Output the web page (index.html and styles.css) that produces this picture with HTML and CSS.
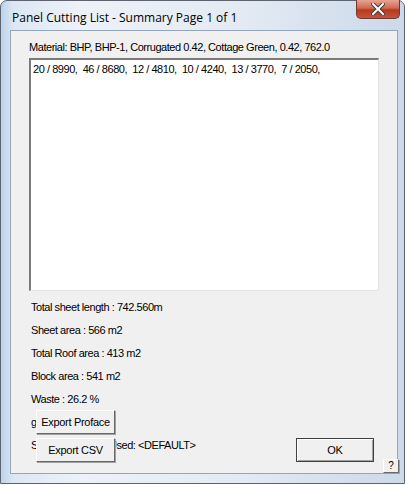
FILE: index.html
```html
<!DOCTYPE html>
<html lang="en">
  <head>
    <meta charset="UTF-8" />
    <title>Panel Cutting List</title>
    <link rel="stylesheet" href="styles.css">
  </head>
  <body>
    <div class="window">
      <!-- Title bar -->
      <div class="titlebar">
        <span class="title">Panel Cutting List - Summary Page 1 of 1</span>
        <button class="close-btn">
          <svg width="14" height="12" viewBox="0 0 14 12">
            <path d="M2 1 L12 11 M12 1 L2 11" stroke="#3b3b3b" stroke-width="4" stroke-linecap="square" />
            <path d="M2 1 L12 11 M12 1 L2 11" stroke="#ffffff" stroke-width="2" stroke-linecap="square" />
          </svg>
        </button>
      </div>

      <!-- Client area -->
      <div class="client">
        <p class="material">Material: BHP, BHP-1, Corrugated 0.42, Cottage Green, 0.42, 762.0</p>
        <div class="listbox">20 / 8990,&nbsp; 46 / 8680,&nbsp; 12 / 4810,&nbsp; 10 / 4240,&nbsp; 13 / 3770,&nbsp; 7 / 2050,</div>

        <div class="stats">
          <div class="stat">Total sheet length : 742.560m</div>
          <div class="stat">Sheet area : 566 m2</div>
          <div class="stat">Total Roof area : 413 m2</div>
          <div class="stat">Block area : 541 m2</div>
          <div class="stat">Waste : 26.2 %</div>
          <div class="stat">gutters</div>
          <div class="stat">Setting Filename Used: &lt;DEFAULT&gt;</div>
        </div>

        <button class="btn btn-proface">Export Proface</button>
        <button class="btn btn-csv">Export CSV</button>
        <button class="btn btn-ok">OK</button>
        <button class="btn btn-help">?</button>
      </div>
    </div>
  </body>
</html>
```

FILE: styles.css
```css
* {
  box-sizing: border-box;
}
html,
body {
  margin: 0;
  height: 100%;
}
body {
  background: #ffffff;
  font-family: "Liberation Sans", Arial, sans-serif;
}
.window {
  width: 405px;
  height: 484px;
  display: flex;
  flex-direction: column;
  padding: 0 6px 9px 9px;
  border: 1px solid #5b6470;
  border-radius: 7px 7px 0 0;
  background: linear-gradient(to right, #bcd2ea 0, #dce7f3 3%, #edf2f8 20%, #e3eaf3 60%, #cbd9ea 100%);
}
.titlebar {
  height: 29px;
  display: flex;
  align-items: flex-start;
  justify-content: space-between;
}
.title {
  font-family: "Open Sans", sans-serif;
  font-size: 12px;
  color: #000;
  margin: 8px 0 0 2px;
}
.close-btn {
  width: 44px;
  height: 19px;
  margin-top: -1px;
  margin-right: -2px;
  border: 1px solid #6f3a32;
  border-top: none;
  border-radius: 0 0 5px 5px;
  background: linear-gradient(to bottom, #e8a493 0, #d1694f 45%, #b43a1f 55%, #c8523a 100%);
  display: flex;
  align-items: center;
  justify-content: center;
  padding: 0;
}
.client {
  flex: 1;
  position: relative;
  background: #f0f0f0;
  border: 1px solid #94a6bc;
  padding: 9px 18px 0 18px;
  font-size: 11px;
  letter-spacing: -0.45px;
  color: #000;
}
.material {
  margin: 0;
  height: 18px;
  line-height: 14px;
}
.listbox {
  height: 233px;
  background: #ffffff;
  border-top: 2px solid #7a7a7a;
  border-left: 2px solid #7a7a7a;
  border-right: 1px solid #e3e3e3;
  border-bottom: 1px solid #e3e3e3;
  padding: 2px 2px;
  line-height: 14px;
  white-space: nowrap;
}
.stats {
  margin-top: 5px;
  display: flex;
  flex-direction: column;
}
.stat {
  height: 23px;
  line-height: 23px;
  padding-left: 2px;
}
.btn {
  position: absolute;
  font-family: "Liberation Sans", Arial, sans-serif;
  font-size: 11px;
  letter-spacing: -0.3px;
  color: #000;
  background: #f0f0f0;
  border: 1px solid;
  border-color: #ffffff #696969 #696969 #ffffff;
  box-shadow: 1px 1px 0 #a0a0a0;
  padding: 0;
}
.btn-proface {
  left: 25px;
  top: 379px;
  width: 79px;
  height: 24px;
}
.btn-csv {
  left: 25px;
  top: 407px;
  width: 79px;
  height: 24px;
}
.btn-ok {
  left: 285px;
  top: 407px;
  width: 78px;
  height: 24px;
  border: 1px solid #404040;
  box-shadow: inset 1px 1px 0 #ffffff, inset -1px -1px 0 #a0a0a0;
}
.btn-help {
  left: 372px;
  top: 428px;
  width: 16px;
  height: 14px;
  font-size: 10px;
  line-height: 12px;
}
```
